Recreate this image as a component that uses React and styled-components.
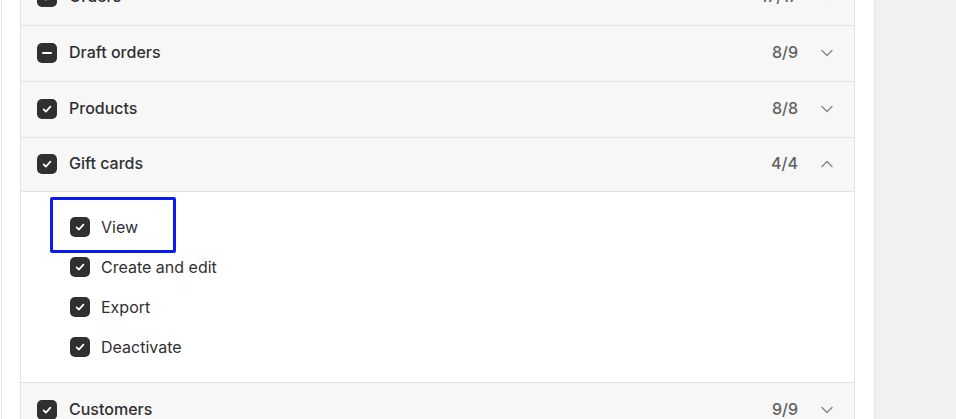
import React from "react";
import styled, { createGlobalStyle } from "styled-components";

const Global = createGlobalStyle`
  html, body {
    margin: 0;
    padding: 0;
    background: #f1f1f1;
  }
  body {
    font-family: Inter, "Noto Sans", sans-serif;
    color: #303030;
    -webkit-font-smoothing: antialiased;
  }
`;

const Page = styled.div`
  display: flex;
  height: 419px;
  overflow: hidden;
  background: #f1f1f1;
  border-left: 1px solid #ffffff;
`;

const Panel = styled.div`
  width: 835px;
  flex: none;
  background: #ffffff;
  border-left: 1px solid #e3e3e3;
  border-right: 1px solid #e3e3e3;
  padding: 0 19px 0 18px;
`;

const List = styled.div`
  margin-top: -30px;
  border-left: 1px solid #e3e3e3;
  border-right: 1px solid #e3e3e3;
`;

const Header = styled.div`
  display: flex;
  align-items: center;
  box-sizing: border-box;
  height: ${(p) => (p.open ? "54px" : "56px")};
  padding: 0 17px 2px 16px;
  background: #f7f7f7;
  border-bottom: 1px solid #e3e3e3;
`;

const Label = styled.span`
  flex: 1;
  margin: 0 0 2px 12px;
  font-size: 16px;
  font-weight: 550;
  color: #303030;
`;

const Count = styled.span`
  margin: 0 19px 2px 0;
  font-size: 16px;
  font-weight: 500;
  color: #616161;
`;

const Chevron = styled.span`
  display: flex;
  align-items: center;
  justify-content: center;
  width: 20px;
  height: 20px;
  color: #8a8a8a;
`;

const Box = styled.span`
  position: relative;
  display: flex;
  align-items: center;
  justify-content: center;
  flex: none;
  width: 20px;
  height: 20px;
  border-radius: 5px;
  background: #303030;
  color: #ffffff;
`;

const Dash = styled.span`
  width: 10px;
  height: 2px;
  border-radius: 1px;
  background: #ffffff;
`;

const SubList = styled.div`
  background: #ffffff;
  padding: 15px 0 15px 49px;
  border-bottom: 1px solid #e3e3e3;
`;

const SubItem = styled.div`
  position: relative;
  display: flex;
  align-items: center;
  height: 40px;
`;

const SubLabel = styled.span`
  margin-left: 11px;
  font-size: 16px;
  font-weight: 400;
  color: #303030;
`;

const Highlight = styled.div`
  position: absolute;
  left: -20px;
  top: -10px;
  width: 126px;
  height: 56px;
  box-sizing: border-box;
  border: 3px solid #0a1bf5;
  border-radius: 2px;
  pointer-events: none;
`;

const Check = () => (
  <svg width="12" height="12" viewBox="0 0 12 12" fill="none">
    <path
      d="M2.6 6.3 L4.9 8.6 L9.4 3.6"
      stroke="currentColor"
      strokeWidth="1.7"
      strokeLinecap="round"
      strokeLinejoin="round"
    />
  </svg>
);

const Checkbox = ({ partial }) => <Box>{partial ? <Dash /> : <Check />}</Box>;

const Caret = ({ up }) => (
  <svg width="14" height="14" viewBox="0 0 14 14" fill="none">
    <path
      d={up ? "M2 9.5 L7 4.5 L12 9.5" : "M2 4.5 L7 9.5 L12 4.5"}
      stroke="currentColor"
      strokeWidth="1.5"
      strokeLinecap="round"
      strokeLinejoin="round"
    />
  </svg>
);

const sections = [
  { id: "orders", name: "Orders", count: "17/17" },
  { id: "draft", name: "Draft orders", count: "8/9", partial: true },
  { id: "products", name: "Products", count: "8/8" },
  {
    id: "gift",
    name: "Gift cards",
    count: "4/4",
    open: true,
    items: ["View", "Create and edit", "Export", "Deactivate"],
  },
  { id: "customers", name: "Customers", count: "9/9" },
];

export default function App() {
  return (
    <>
      <Global />
      <Page>
        <Panel>
          <List>
            {sections.map((s) => (
              <React.Fragment key={s.id}>
                <Header open={s.open}>
                  <Checkbox partial={s.partial} />
                  <Label>{s.name}</Label>
                  <Count>{s.count}</Count>
                  <Chevron>
                    <Caret up={s.open} />
                  </Chevron>
                </Header>
                {s.open && (
                  <SubList>
                    {s.items.map((item, i) => (
                      <SubItem key={item}>
                        <Checkbox />
                        <SubLabel>{item}</SubLabel>
                        {i === 0 && <Highlight />}
                      </SubItem>
                    ))}
                  </SubList>
                )}
              </React.Fragment>
            ))}
          </List>
        </Panel>
      </Page>
    </>
  );
}
